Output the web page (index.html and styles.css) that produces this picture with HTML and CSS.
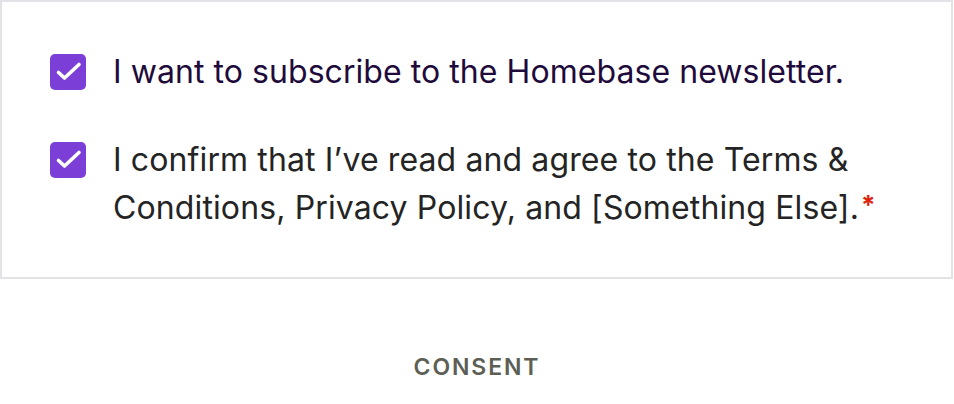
FILE: index.html
```html
<!DOCTYPE html>
<html>
<head>
<meta charset="utf-8">
<link rel="stylesheet" href="styles.css">
</head>
<body>
<div class="card">
  <label class="row">
    <span class="box"><svg viewBox="0 0 36 36" width="36" height="36"><path d="M8.5 18.5l6 5.5L29 10.5" fill="none" stroke="#fff" stroke-width="3.6" stroke-linecap="round" stroke-linejoin="round"/></svg></span>
    <span class="text t1">I want to subscribe to the Homebase newsletter.</span>
  </label>
  <label class="row">
    <span class="box"><svg viewBox="0 0 36 36" width="36" height="36"><path d="M8.5 18.5l6 5.5L29 10.5" fill="none" stroke="#fff" stroke-width="3.6" stroke-linecap="round" stroke-linejoin="round"/></svg></span>
    <span class="text t2">I confirm that I’ve read and agree to the Terms &amp; Conditions, Privacy Policy, and [Something Else].<span class="req">*</span></span>
  </label>
</div>
<div class="caption">CONSENT</div>
</body>
</html>
```
FILE: styles.css
```css
html, body { margin: 0; padding: 0; background: #fff; }
body { font-family: Inter, "Noto Sans", sans-serif; width: 954px; height: 404px; }
.card {
  width: 953px;
  height: 279px;
  border: 2px solid #e3e3e7;
  box-sizing: border-box;
  display: flex;
  flex-direction: column;
  gap: 40px;
  padding-top: 46px;
  padding-left: 48px;
}
.row { display: flex; align-items: flex-start; gap: 27px; }
.box {
  flex: none;
  width: 36px; height: 36px;
  border-radius: 5px;
  background: #7b3fd8;
  margin-top: 6px;
  display: block;
}
.box svg { display: block; }
.text { font-size: 32px; line-height: 48px; }
.t1 { color: #1e0b3b; letter-spacing: 0.06px; }
.t2 { color: #242424; max-width: 790px; letter-spacing: 0.12px; }
.req { color: #e0230b; font-size: 26px; font-weight: 700; position: relative; top: -5px; margin-left: 2px; }
.caption {
  text-align: center;
  margin-top: 74px;
  font-size: 23px;
  line-height: 28px;
  font-weight: 600;
  letter-spacing: 1.9px;
  color: #5d5f55;
}
```
